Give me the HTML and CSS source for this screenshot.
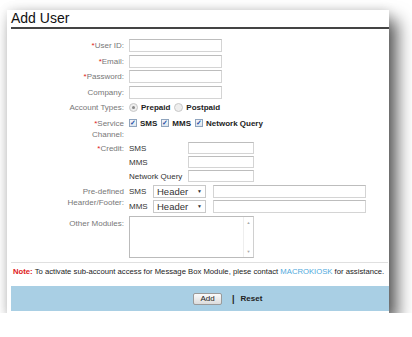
FILE: index.html
```html
<!DOCTYPE html>
<html lang="en">
<head>
  <meta charset="UTF-8" />
  <title>Add User</title>
  <link rel="stylesheet" href="styles.css">
</head>
<body>
  <div class="panel">
    <h1 class="title">Add User</h1>

    <div class="form">
      <div class="row">
        <label class="lbl"><span class="req">*</span>User ID:</label>
        <div class="field"><span class="input w93"></span></div>
      </div>
      <div class="row">
        <label class="lbl"><span class="req">*</span>Email:</label>
        <div class="field"><span class="input w93"></span></div>
      </div>
      <div class="row">
        <label class="lbl"><span class="req">*</span>Password:</label>
        <div class="field"><span class="input w93"></span></div>
      </div>
      <div class="row">
        <label class="lbl">Company:</label>
        <div class="field"><span class="input w93"></span></div>
      </div>

      <div class="row row-small">
        <label class="lbl">Account Types:</label>
        <div class="field opts">
          <span class="opt"><span class="radio checked"></span>Prepaid</span>
          <span class="opt"><span class="radio"></span>Postpaid</span>
        </div>
      </div>

      <div class="row row-two">
        <label class="lbl"><span class="req">*</span>Service<br>Channel:</label>
        <div class="field opts top">
          <span class="opt"><span class="check">&#10003;</span>SMS</span>
          <span class="opt"><span class="check">&#10003;</span>MMS</span>
          <span class="opt"><span class="check">&#10003;</span>Network Query</span>
        </div>
      </div>

      <div class="row row-credit">
        <label class="lbl"><span class="req">*</span>Credit:</label>
        <div class="credit">
          <span class="sub">SMS</span><span class="input w66"></span>
          <span class="sub">MMS</span><span class="input w66"></span>
          <span class="sub">Network Query</span><span class="input w66"></span>
        </div>
      </div>

      <div class="row row-pre">
        <label class="lbl">Pre-defined<br>Hearder/Footer:</label>
        <div class="pre">
          <span class="sub">SMS</span>
          <span class="select">Header<span class="caret">&#9660;</span></span>
          <span class="input w153"></span>
          <span class="sub">MMS</span>
          <span class="select">Header<span class="caret">&#9660;</span></span>
          <span class="input w153"></span>
        </div>
      </div>

      <div class="row row-area">
        <label class="lbl">Other Modules:</label>
        <div class="field">
          <div class="textarea">
            <div class="scroll">
              <span class="arrow">&#9650;</span>
              <span class="arrow">&#9660;</span>
            </div>
          </div>
        </div>
      </div>
    </div>

    <p class="note"><b>Note:</b> To activate sub-account access for Message Box Module, plese contact <a href="#">MACROKIOSK</a> for assistance.</p>

    <div class="actions">
      <button class="btn">Add</button>
      <span class="sep">|</span>
      <a class="reset" href="#">Reset</a>
    </div>
  </div>
</body>
</html>
```

FILE: styles.css
```css
body {
  margin: 0;
  background: #fff;
  font-family: 'Liberation Sans', Arial, sans-serif;
  font-size: 8px;
  color: #333;
}

.panel {
  margin: 10px 0 0 7px;
  width: 382px;
  height: 303px;
  padding-left: 4px;
  box-sizing: border-box;
  background: #fff;
  box-shadow: 8px 10px 16px rgba(0, 0, 0, 0.65), 0 0 10px rgba(0, 0, 0, 0.12);
  display: flex;
  flex-direction: column;
}

.title {
  margin: 0;
  font-size: 14px;
  font-weight: normal;
  line-height: 17px;
  color: #111;
  border-bottom: 2px solid #444;
}

.form {
  margin-top: 10px;
  display: flex;
  flex-direction: column;
  gap: 2.5px;
}

.row {
  display: grid;
  grid-template-columns: 113px 1fr;
  column-gap: 5px;
  height: 13px;
  align-items: center;
}

.lbl {
  text-align: right;
  color: #777;
  line-height: 11px;
}

.req {
  color: #e02020;
}

.input {
  display: inline-block;
  height: 13px;
  box-sizing: border-box;
  border: 1px solid #d4d4d4;
  border-top-color: #bdbdbd;
  background: #fff;
  vertical-align: middle;
}

.w93 { width: 93px; }
.w66 { width: 66px; height: 12px; }
.w153 { width: 153px; }

.row-small {
  height: 11px;
  margin-top: 0.5px;
}

.opts {
  display: flex;
  gap: 4px;
  align-items: center;
  font-weight: bold;
  color: #222;
}

.opt {
  display: flex;
  align-items: center;
  gap: 3px;
}

.radio {
  width: 7px;
  height: 7px;
  border-radius: 50%;
  border: 1px solid #c8c8c8;
  background: #eee;
  display: flex;
  align-items: center;
  justify-content: center;
}

.radio.checked::after {
  content: "";
  width: 3px;
  height: 3px;
  border-radius: 50%;
  background: #888;
}

.row-two {
  height: 22px;
  align-items: start;
  margin-top: 2.5px;
}

.top {
  height: 11px;
}

.check {
  width: 8px;
  height: 8px;
  box-sizing: border-box;
  border: 1px solid #8fa4bd;
  background: linear-gradient(#f4f6fa, #dfe6ef);
  color: #2a55a8;
  font-size: 7px;
  line-height: 6px;
  text-align: center;
  font-weight: bold;
}

.row-credit {
  height: 40px;
  align-items: start;
}

.row-credit .lbl {
  margin-top: 1px;
}

.credit {
  display: grid;
  grid-template-columns: 59px 66px;
  row-gap: 2px;
  align-items: center;
}

.sub {
  color: #333;
}

.row-pre {
  height: 28px;
  align-items: start;
  margin-top: 0.5px;
}

.row-pre .lbl {
  margin-top: 1px;
}

.pre {
  display: grid;
  grid-template-columns: 24px 53px 153px;
  row-gap: 2px;
  align-items: center;
}

.pre .input {
  margin-left: 7px;
}

.select {
  height: 13px;
  box-sizing: border-box;
  border: 1px solid #c9c9c9;
  background: #fff;
  font-size: 9.5px;
  line-height: 11px;
  padding-left: 3px;
  color: #333;
  display: flex;
  justify-content: space-between;
}

.caret {
  font-size: 5px;
  line-height: 11px;
  padding-right: 3px;
  color: #333;
}

.row-area {
  height: 42px;
  align-items: start;
}

.row-area .lbl {
  margin-top: 2px;
}

.textarea {
  width: 125px;
  height: 42px;
  box-sizing: border-box;
  border: 1px solid #bbb;
  border-right-color: #d0d0d0;
  background: #fff;
  display: flex;
  justify-content: flex-end;
}

.scroll {
  width: 9px;
  border-left: 1px solid #eee;
  display: flex;
  flex-direction: column;
  justify-content: space-between;
  align-items: center;
  padding: 3px 0;
}

.arrow {
  font-size: 4px;
  color: #aaa;
}

.note {
  margin: 4px 1px 0 0;
  border-top: 1px solid #e0e0e0;
  padding: 3px 0 0 2px;
  line-height: 11px;
  font-size: 7.7px;
  white-space: nowrap;
  color: #222;
}

.note b {
  color: #e02020;
}

.note a {
  color: #4fa9dc;
  text-decoration: none;
}

.actions {
  margin-top: auto;
  margin-bottom: 2px;
  height: 25px;
  background: #a9cfe4;
  display: flex;
  align-items: center;
  padding-left: 182px;
  gap: 10px;
}

.btn {
  width: 29px;
  height: 12px;
  padding: 0;
  border: 1px solid #9a9a9a;
  border-radius: 2px;
  background: linear-gradient(#fbfbfb, #dcdcdc);
  font-family: 'Liberation Sans', Arial, sans-serif;
  font-size: 8px;
  color: #222;
}

.sep {
  font-weight: bold;
  color: #222;
  font-size: 9px;
}

.reset {
  margin-left: -4px;
  font-weight: bold;
  color: #222;
  text-decoration: none;
}
```
